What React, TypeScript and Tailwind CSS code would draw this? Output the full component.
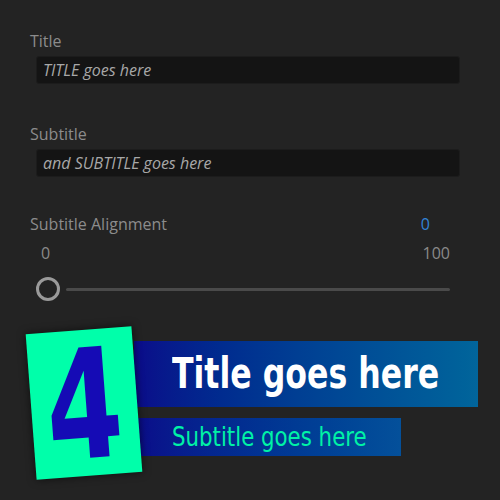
const ui = { fontFamily: '"Open Sans", "Noto Sans", sans-serif' };
const cond = { fontFamily: '"DejaVu Sans", sans-serif' };

function Field({ label, value, gap }: { label: string; value: string; gap: string }) {
  return (
    <div className={gap}>
      <div className="text-[16px] leading-[20px] text-[#8c8c8c]">{label}</div>
      <div className="ml-[6px] mt-[5px] flex h-[28px] w-[424px] items-center rounded-[3px] border border-[#1c1c1c] bg-[#141414] px-[6px]">
        <span className="text-[16px] italic leading-[20px] text-[#a8a8a8]">{value}</span>
      </div>
    </div>
  );
}

export default function App() {
  return (
    <div className="h-[500px] w-[500px] overflow-hidden bg-[#232323]" style={ui}>
      <div className="pl-[30px] pt-[31px]">
        <Field label="Title" value="TITLE goes here" gap="" />
        <Field label="Subtitle" value="and SUBTITLE goes here" gap="mt-[40px]" />

        <div className="mt-[37px] flex w-[400px] items-start justify-between text-[16px] leading-[20px]">
          <span className="text-[#8c8c8c]">Subtitle Alignment</span>
          <span className="text-[#3283d6]">0</span>
        </div>
        <div className="ml-[11px] mt-[9px] flex w-[409px] justify-between text-[16px] leading-[20px] text-[#8a8a8a]">
          <span>0</span>
          <span>100</span>
        </div>
        <div className="ml-[6px] mt-[14px] flex items-center">
          <div className="h-[24px] w-[24px] rounded-full border-[3px] border-[#9a9a9a]" />
          <div className="ml-[6px] h-[3px] w-[384px] rounded-full bg-[#4a4a4a]" />
        </div>
      </div>

      <div className="relative mt-[19px] h-[160px]">
        <div className="ml-[134px] pt-[21px]">
          <div className="flex h-[66px] w-[344px] items-center bg-gradient-to-r from-[#0b0a8a] to-[#02659b] pl-[38px]">
            <span className="inline-block origin-left scale-x-[0.752] whitespace-nowrap text-[42px] font-bold leading-none text-white" style={cond}>
              Title goes here
            </span>
          </div>
          <div className="mt-[11px] flex h-[38px] w-[267px] items-center bg-gradient-to-r from-[#0b0a8a] to-[#04509a] pl-[38px]">
            <span className="inline-block origin-left scale-x-[0.82] whitespace-nowrap text-[26px] leading-none text-[#00f2a6]" style={cond}>
              Subtitle goes here
            </span>
          </div>
        </div>
        <div className="absolute left-[31px] top-[10px] flex h-[146px] w-[106px] -rotate-[4.3deg] items-center justify-center bg-[#00ffaa] shadow-[0_0_8px_rgba(0,0,0,0.6)]">
          <span className="inline-block translate-y-[3px] scale-x-[0.72] text-[152px] font-bold leading-none text-[#150bb5]" style={cond}>
            4
          </span>
        </div>
      </div>
    </div>
  );
}
